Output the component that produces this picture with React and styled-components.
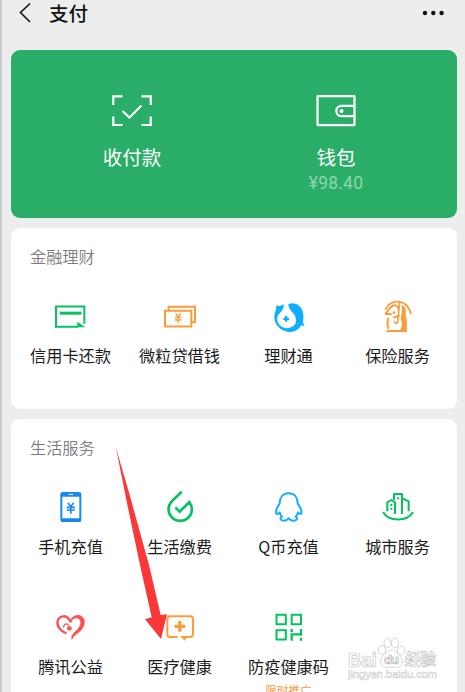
import React from 'react';
import styled, { createGlobalStyle } from 'styled-components';

const GlobalStyle = createGlobalStyle`
  * {
    box-sizing: border-box;
  }
  body {
    margin: 0;
    background: #ededed;
    font-family: 'Noto Sans CJK SC', 'Liberation Sans', sans-serif;
  }
`

const Screen = styled.div`
  position: relative;
  display: flex;
  flex-direction: column;
  width: 465px;
  height: 692px;
  overflow: hidden;
  background: #ededed;
  border-left: 2px solid #c6cbd0;
  padding: 0 8px 0 9px;
`

const Header = styled.header`
  flex: none;
  display: flex;
  align-items: center;
  height: 26px;
  margin-bottom: 24px;
  padding: 0 11px 0 8px;
`

const Title = styled.h1`
  flex: 1;
  margin: 0 0 0 17px;
  font-size: 19.5px;
  line-height: 26px;
  font-weight: 500;
  color: #111;
`

const PayCard = styled.section`
  flex: none;
  display: flex;
  height: 168px;
  margin-bottom: 10px;
  padding: 40px 19px 0;
  border-radius: 9px;
  background: #2aae67;
`

const PayItem = styled.div`
  display: flex;
  flex-direction: column;
  align-items: center;
  width: 204px;
  color: #fff;
`

const PayLabel = styled.span`
  margin-top: 12px;
  font-size: 19.5px;
  line-height: 28px;
`

const Balance = styled.span`
  margin-top: 1px;
  font-family: Roboto, sans-serif;
  font-size: 17.5px;
  line-height: 22px;
  letter-spacing: 0.2px;
  color: #8fd5ae;
`

const Card = styled.section`
  flex: none;
  height: ${props => props.$height}px;
  margin-bottom: 10px;
  padding: 16px 5px 0;
  border-radius: 9px;
  background: #fff;
`

const CardTitle = styled.h2`
  margin: 0 0 ${props => props.$gap}px 14px;
  font-size: 16.2px;
  line-height: 24px;
  font-weight: 350;
  color: #7c7c7c;
`

const Grid = styled.div`
  display: grid;
  grid-template-columns: repeat(4, 109px);
  row-gap: 49px;
`

const Service = styled.div`
  position: relative;
  display: flex;
  flex-direction: column;
  align-items: center;
  gap: ${props => props.$gap}px;
`

const ServiceLabel = styled.span`
  font-size: 16.2px;
  line-height: 24px;
  color: #1c1c1c;
  white-space: nowrap;
`

const Promo = styled.span`
  position: absolute;
  top: 74px;
  font-size: 11.6px;
  line-height: 18px;
  color: #f79a3a;
`

const Glyph = styled.svg.attrs({ viewBox: '-2 0 120 120' })`
  display: block;
  width: 40px;
  height: 40px;
  margin-right: 1px;
  fill: none;
  stroke: ${props => props.$color};
  stroke-width: 6;
`

const Arrow = styled.svg`
  position: absolute;
  left: 112px;
  top: 445px;
`

const Watermark = styled.svg`
  position: absolute;
  left: 342px;
  top: 634px;
`

const GREEN = '#07c160';
const ORANGE = '#fa9d3b';
const BLUE = '#10aeff';

const CreditIcon = () => (
  <Glyph $color={GREEN}>
    <path d="M82 89H16V28.500H101V80" />
    <path d="M27 48.500H92" strokeWidth="9" />
    <path d="M80 74L105 91H80z" fill={GREEN} stroke="none" />
  </Glyph>
)

const LoanIcon = () => (
  <Glyph $color={ORANGE}>
    <path d="M16 41.500H95V88.500H16zM27 38V29.500H106V76H98" />
    <path d="M48 49L55.500 60L63 49M46 61.500H65M46 69H65M55.500 60V79" strokeWidth="4" />
  </Glyph>
)

const FundIcon = () => (
  <Glyph $color={BLUE}>
    <g fill={BLUE} stroke="none">
      <path d="M23 24C29 29 37 27 45 22C46 35 40 42 33 49C22 60 24 78 37 88C51 98 70 94 79 82C85 73 82 61 77 53C68 42 60 36 59 22C75 14 94 23 101 40C105 51 105 65 103 76L107 88L98 85C88 101 73 107 56 104C35 101 19 84 17 64C16 52 20 45 22 36z" />
      <path d="M49 57H56V62H61V69H56V74H49V69H44V62H49z" />
    </g>
  </Glyph>
)

const InsuranceIcon = () => (
  <Glyph $color={ORANGE}>
    <path d="M23 38C38 4 88 3 100 52" strokeWidth="5.500" />
    <path d="M22 50C32 46 33 31 44 27C56 21 62 30 62 37" strokeWidth="6" />
    <path d="M22 51H42" strokeWidth="6" />
    <path d="M32 62C28 76 29 88 33 95" strokeWidth="6" />
    <path d="M66 12L60 75C58 81 51 80 50 73M46 62L66 56" strokeWidth="5" />
    <path d="M71 25C84 26 86 40 84 53C89 68 88 88 87 101H66C75 89 74 78 70 68C68 60 76 45 71 25z" fill={ORANGE} stroke="none" />
    <path d="M25 105C28 95 35 99 45 99H78C86 99 88 100 89 105z" fill={ORANGE} stroke="none" />
    <circle cx="49" cy="47" r="4" fill={ORANGE} stroke="none" />
  </Glyph>
)

const PhoneIcon = () => (
  <Glyph $color="#1989f0">
    <rect x="32" y="18" width="57" height="84" rx="4" />
    <path d="M31 24H90M31 99H90" strokeWidth="11" />
    <path d="M54 22H67" stroke="#fff" strokeWidth="3" />
    <path d="M52 47L60.500 59L69 47M48 61H73M48 69H73M60.500 59V80" strokeWidth="5" />
  </Glyph>
)

const BillIcon = () => (
  <Glyph $color={GREEN}>
    <path d="M66 14L36 43A35 35 0 1 0 89 45L60 74L47 61" strokeWidth="8" />
  </Glyph>
)

const QCoinIcon = () => (
  <Glyph $color={BLUE} strokeLinejoin="round">
    <path d="M60 19C43 19 33 31 33 49C26 59 20 70 23 80C25 82 29 80 33 76C34 82 36 85 40 89C32 93 36 101 45 101C52 101 57 98 60 94C63 98 68 101 75 101C84 101 89 93 81 89C85 85 87 82 88 76C92 80 96 82 98 80C101 70 94 59 87 49C87 31 77 19 60 19z" />
  </Glyph>
)

const CityIcon = () => (
  <Glyph $color={GREEN} strokeLinejoin="round">
    <path d="M16 75C34 105 88 105 106 75" strokeWidth="6.500" />
    <path d="M29 73V46L41 39L52 46V81M49 39V21H73V81M75 34L93 43V73" />
    <path d="M38 54H44M38 65H44M58 34H64" strokeWidth="6" />
  </Glyph>
)

const HeartIcon = () => (
  <Glyph $color="#fa5151" strokeLinecap="round">
    <path d="M45 78C31 73 17 58 21 42C26 24 49 22 59 43" strokeWidth="7" />
    <path d="M59 43C61 31 75 22 89 26C107 34 103 56 91 70C81 80 68 86 64 97C58 80 80 75 88 57C96 39 83 29 71 34C65 36 62 43 60 47z" fill="#fa5151" strokeWidth="2" />
    <path d="M39 60C39 51 48 48 53 54" strokeWidth="4" />
    <circle cx="56" cy="64" r="7" fill="#fa5151" stroke="none" />
  </Glyph>
)

const MedicalIcon = () => (
  <Glyph $color={ORANGE}>
    <path d="M54 90H32Q23 90 23 81V37Q23 28 32 28H91Q100 28 100 37V81Q100 90 91 90H78" />
    <path d="M60.500 42V74M44.500 58H76.500" strokeWidth="10" />
    <path d="M61 87H84L75 101z" fill={ORANGE} stroke="none" />
  </Glyph>
)

const CodeIcon = () => (
  <Glyph $color={GREEN}>
    <path d="M23.500 23.500H51.500V51.500H23.500zM69 23.500H97V51.500H69zM23.500 69.500H51.500V97.500H23.500z" />
    <path d="M69 66V75M69 101V82H97M97 66V86M97 92V101" strokeWidth="7" />
  </Glyph>
)

const finance = [
  { name: '信用卡还款', icon: CreditIcon },
  { name: '微粒贷借钱', icon: LoanIcon },
  { name: '理财通', icon: FundIcon },
  { name: '保险服务', icon: InsuranceIcon },
];

const life = [
  { name: '手机充值', icon: PhoneIcon },
  { name: '生活缴费', icon: BillIcon },
  { name: 'Q币充值', icon: QCoinIcon },
  { name: '城市服务', icon: CityIcon },
  { name: '腾讯公益', icon: HeartIcon },
  { name: '医疗健康', icon: MedicalIcon },
  { name: '防疫健康码', icon: CodeIcon, promo: '限时推广' },
];

const ServiceCard = ({ title, items, height, titleGap, labelGap }) => (
  <Card $height={height}>
    <CardTitle $gap={titleGap}>{title}</CardTitle>
    <Grid>
      {items.map(({ name, icon: Icon, promo }) => (
        <Service key={name} $gap={labelGap}>
          <Icon />
          <ServiceLabel>{name}</ServiceLabel>
          {promo && <Promo>{promo}</Promo>}
        </Service>
      ))}
    </Grid>
  </Card>
)

const App = () => {
  return (
    <Screen>
      <GlobalStyle />
      <Header>
        <svg width="13" height="22" viewBox="0 0 13 22" fill="none" stroke="#111" strokeWidth="1.6">
          <path d="M11 1.500L1.500 10.500L11 20" />
        </svg>
        <Title>支付</Title>
        <svg width="24" height="6" viewBox="0 0 24 6" fill="#111">
          <circle cx="3" cy="3" r="2.200" />
          <circle cx="11.300" cy="3" r="2.200" />
          <circle cx="19.600" cy="3" r="2.200" />
        </svg>
      </Header>

      <PayCard>
        <PayItem>
          <svg width="40" height="41" viewBox="0 0 40 41" fill="none" stroke="#fff" strokeWidth="2.200">
            <path d="M1.300 15V6.300H10.500M29.500 6.300H38.700V15M38.700 26.500V35H29.500M10.500 35H1.300V26.500" />
            <path d="M10.500 21L17.500 27.500L29.500 15.500" />
          </svg>
          <PayLabel>收付款</PayLabel>
        </PayItem>
        <PayItem>
          <svg width="40" height="41" viewBox="0 0 40 41" fill="none" stroke="#fff" strokeWidth="2.200">
            <rect x="1.500" y="6.200" width="37" height="29" rx="0.500" />
            <path d="M38 15.800H25.500A5.200 5.200 0 0 0 25.500 26.200H38" />
            <circle cx="25.500" cy="21" r="2" fill="#fff" stroke="none" />
          </svg>
          <PayLabel>钱包</PayLabel>
          <Balance>¥98.40</Balance>
        </PayItem>
      </PayCard>

      <ServiceCard title="金融理财" items={finance} height={181} titleGap={29} labelGap={6} />
      <ServiceCard title="生活服务" items={life} height={290} titleGap={28} labelGap={7} />

      <Arrow width="60" height="200" viewBox="114 445 60 200">
        <path d="M116 448L130 496L149 565L160.700 615L167 614.300L161 639L145 619.300L151.700 617.300L140 565L127 503z" fill="#fb3838" />
      </Arrow>

      <Watermark width="100" height="50" viewBox="344 634 100 50">
        <g fill="#fff" stroke="#c4c4c4" strokeWidth="0.700" fontWeight="700">
          <text x="348" y="666.500" fontFamily="Liberation Sans, sans-serif" fontSize="20" textLength="29" lengthAdjust="spacingAndGlyphs">Bai</text>
          <ellipse cx="382" cy="650" rx="3.500" ry="4.500" />
          <ellipse cx="387.500" cy="643" rx="3.500" ry="4.800" />
          <ellipse cx="395" cy="643" rx="3.500" ry="4.800" />
          <ellipse cx="401" cy="650.500" rx="3.500" ry="4.500" />
          <path d="M391.500 650C387 650 380 658 380.500 662C381 669 387 667 391.500 667C396 667 402 669 402.500 662C403 658 396 650 391.500 650z" />
          <text x="384" y="664" fontFamily="Liberation Sans, sans-serif" fontSize="13" textLength="15" stroke="#b4b4b4">du</text>
          <text x="405" y="665" fontFamily="Noto Sans CJK SC, sans-serif" fontSize="15.500">经验</text>
        </g>
        <text x="348" y="678" fontFamily="Liberation Sans, sans-serif" fontSize="10.500" fill="#fff" stroke="#d2d2d2" strokeWidth="0.600" textLength="89" lengthAdjust="spacingAndGlyphs">jingyan.baidu.com</text>
      </Watermark>
    </Screen>
  );
}
export default App;
